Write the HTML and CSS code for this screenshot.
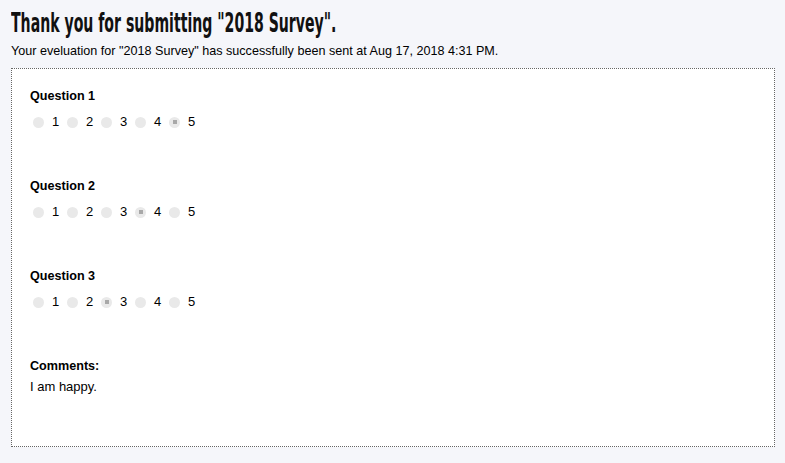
FILE: index.html
```html
<!DOCTYPE html>
<html>
<head>
<meta charset="utf-8">
<link rel="stylesheet" href="styles.css">
</head>
<body>
<h1 class="title"><span class="title-text">Thank you for submitting "2018 Survey".</span></h1>
<p class="subtitle">Your eveluation for "2018 Survey" has successfully been sent at Aug 17, 2018 4:31 PM.</p>
<div class="box">
  <div class="question">
    <div class="q-label">Question 1</div>
    <div class="options">
      <span class="opt"><span class="radio"></span>1</span>
      <span class="opt"><span class="radio"></span>2</span>
      <span class="opt"><span class="radio"></span>3</span>
      <span class="opt"><span class="radio"></span>4</span>
      <span class="opt"><span class="radio checked"></span>5</span>
    </div>
  </div>
  <div class="question">
    <div class="q-label">Question 2</div>
    <div class="options">
      <span class="opt"><span class="radio"></span>1</span>
      <span class="opt"><span class="radio"></span>2</span>
      <span class="opt"><span class="radio"></span>3</span>
      <span class="opt"><span class="radio checked"></span>4</span>
      <span class="opt"><span class="radio"></span>5</span>
    </div>
  </div>
  <div class="question">
    <div class="q-label">Question 3</div>
    <div class="options">
      <span class="opt"><span class="radio"></span>1</span>
      <span class="opt"><span class="radio"></span>2</span>
      <span class="opt"><span class="radio checked"></span>3</span>
      <span class="opt"><span class="radio"></span>4</span>
      <span class="opt"><span class="radio"></span>5</span>
    </div>
  </div>
  <div class="comments">
    <div class="q-label">Comments:</div>
    <div class="comment-text">I am happy.</div>
  </div>
</div>
</body>
</html>
```
FILE: styles.css
```css
html, body {
  margin: 0;
  padding: 0;
  background: #f5f6fa;
}
body {
  padding: 8px 10px 0 11px;
  font-family: "Liberation Sans", Arial, sans-serif;
  font-size: 12.6px;
  color: #000;
}
.title {
  font-family: "DejaVu Sans", sans-serif;
  font-stretch: condensed;
  font-weight: bold;
  font-size: 27px;
  line-height: 30px;
  margin: 0;
  color: #111;
  white-space: nowrap;
}
.title-text {
  display: inline-block;
  transform: scaleX(0.58);
  transform-origin: left center;
}
.subtitle {
  margin: 5px 0 0 0;
  line-height: 16px;
}
.box {
  margin-top: 9px;
  height: 379px;
  box-sizing: border-box;
  border: 1px dotted #666;
  background: #fff;
  padding: 19px 18px;
  display: flex;
  flex-direction: column;
}
.question {
  height: 90px;
}
.q-label {
  font-weight: bold;
  line-height: 16px;
}
.options {
  display: flex;
  margin-top: 10px;
  margin-left: 3px;
  line-height: 16px;
}
.opt {
  display: flex;
  align-items: center;
  width: 34px;
  font-size: 13px;
}
.radio {
  width: 11px;
  height: 11px;
  border-radius: 50%;
  background: #e9e9e9;
  margin-right: 8px;
  display: flex;
  align-items: center;
  justify-content: center;
}
.radio.checked::after {
  content: "";
  width: 4px;
  height: 4px;
  background: #a8a8a8;
}
.comment-text {
  margin-top: 5px;
  line-height: 16px;
  font-size: 13px;
}
```
